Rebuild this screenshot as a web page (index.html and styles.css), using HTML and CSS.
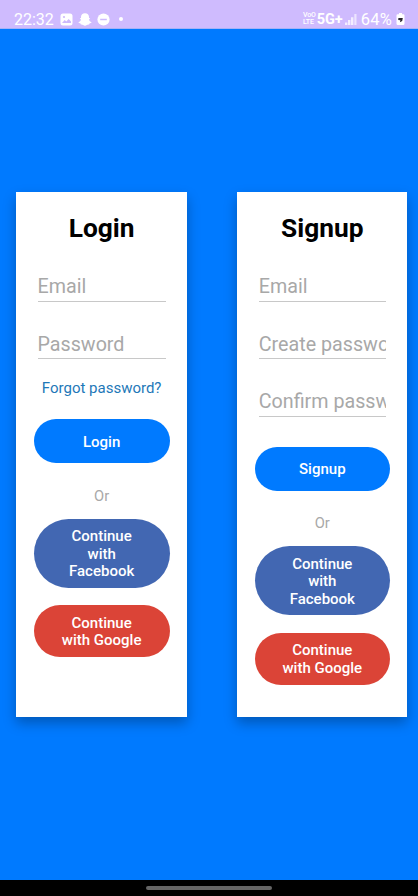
FILE: index.html
```html
<!DOCTYPE html>
<html lang="en">
<head>
<meta charset="utf-8">
<title>Login and Signup</title>
<link rel="stylesheet" href="styles.css">
</head>
<body>
<header class="status">
  <div class="status-left">
    <span class="clock">22:32</span>
    <svg class="i-photo" width="13" height="13" viewBox="0 0 13 13"><rect x=".5" y=".5" width="12" height="12" rx="2.5" fill="#fff"/><circle cx="4" cy="4" r="1.1" fill="#cdb9fc"/><path d="M2 10 4.7 7 6.3 8.4 8.7 6 11 8.6V10Z" fill="#cdb9fc"/></svg>
    <svg class="i-ghost" width="14" height="13" viewBox="0 0 14 13"><path d="M7 .3C4.5.3 3 1.8 3 3.9V5L1.8 5.2 3 6.7C2.7 7.8 1.8 8.7.4 9.2.6 10 1.7 10.2 2.5 10.4L2.9 11.5C4.8 11.2 5.3 12.7 7 12.7S9.2 11.2 11.1 11.5L11.5 10.4C12.3 10.2 13.4 10 13.6 9.2 12.2 8.7 11.3 7.8 11 6.7L12.2 5.2 11 5V3.9C11 1.8 9.5.3 7 .3Z" fill="#fff"/></svg>
    <svg class="i-dnd" width="13" height="13" viewBox="0 0 13 13"><circle cx="6.5" cy="6.5" r="6.1" fill="#fff"/><path d="M3.2 6.5H9.8" stroke="#cdb9fc" stroke-width="1.5"/></svg>
    <span class="dot"></span>
  </div>
  <div class="status-right">
    <span class="volte"><span>VoO</span><span>LTE</span></span>
    <span class="network">5G+</span>
    <svg class="i-signal" width="12" height="12" viewBox="0 0 12 12"><path d="M1.2 12V9.5M4.2 12V7M7.2 12V4.2" stroke="#fff" stroke-opacity=".75" stroke-width="2.4"/><path d="M10.4 12V1" stroke="#fff" stroke-opacity=".6" stroke-width="2.2"/></svg>
    <span class="battery">64%</span>
    <svg class="i-battery" width="9" height="12" viewBox="0 0 9 12"><path d="M3 0H6V1.2H7.3Q8.5 1.2 8.5 2.5V10.5Q8.5 12 7.2 12H1.8Q.5 12 .5 10.5V2.5Q.5 1.2 1.7 1.2H3Z" fill="#fff"/><path d="M2.4 5.1H6.8L6.2 8 3.9 9.2 4.4 7.2 2.2 7Z" fill="#29252e"/></svg>
  </div>
</header>
<main class="screen">
  <section class="card login">
    <h1>Login</h1>
    <div class="field">Email</div>
    <div class="field">Password</div>
    <a class="forgot">Forgot password?</a>
    <button class="btn">Login</button>
    <p class="or">Or</p>
    <button class="btn facebook">Continue<br>with<br>Facebook</button>
    <button class="btn google">Continue<br>with Google</button>
  </section>
  <section class="card signup">
    <h1>Signup</h1>
    <div class="field">Email</div>
    <div class="field">Create password</div>
    <div class="field">Confirm password</div>
    <button class="btn">Signup</button>
    <p class="or">Or</p>
    <button class="btn facebook">Continue<br>with<br>Facebook</button>
    <button class="btn google">Continue<br>with Google</button>
  </section>
</main>
<footer class="nav"><span class="handle"></span></footer>
</body>
</html>
```

FILE: styles.css
```css
* { box-sizing: border-box; }
body {
  margin: 0;
  width: 418px;
  height: 896px;
  display: flex;
  flex-direction: column;
  overflow: hidden;
  background: #007aff;
  font-family: Roboto, sans-serif;
}
.status {
  height: 29px;
  flex: none;
  display: flex;
  justify-content: space-between;
  padding: 8px 13px 0 14px;
  background: #cfbbfe;
  border-bottom: 1px solid #a5b2f8;
  color: #fff;
}
.status-left, .status-right { display: flex; align-items: center; height: 22px; }
.status svg { display: block; flex: none; }
.clock { font-size: 16px; width: 40px; margin-right: 6px; }
.i-photo { margin-right: 5px; }
.i-ghost { margin-right: 5px; }
.i-dnd { margin-right: 9px; }
.dot { width: 4px; height: 4px; border-radius: 50%; background: #fff; }
.volte { display: flex; flex-direction: column; font-size: 7px; line-height: 7px; font-weight: 500; letter-spacing: -.2px; margin-right: 1px; }
.network { font-size: 14.5px; font-weight: 700; margin-right: 2px; }
.i-signal { margin-right: 4px; }
.battery { font-size: 16.5px; letter-spacing: .2px; margin-right: 4px; }

.screen {
  flex: 1;
  display: flex;
  align-items: flex-start;
  gap: 50px;
  padding: 163px 11px 0 16px;
}
.card {
  height: 524.5px;
  padding: 20px 17.5px 0;
  background: #fff;
  box-shadow: 0 6px 12px rgba(0, 0, 0, .28);
  display: flex;
  flex-direction: column;
}
.login { width: 171.3px; flex: none; }
.signup { width: 170px; flex: none; }
h1 { margin: 0 0 31px; font-size: 26.3px; line-height: 33px; height: 32px; font-weight: 700; text-align: center; color: #000; }
.field {
  flex: none;
  height: 26.6px;
  margin: 0 4px 31px;
  border-bottom: 1px solid #c8c8c8;
  overflow: hidden;
  white-space: nowrap;
  font-size: 19.7px;
  line-height: 24.4px;
  color: #a8a8a8;
}
.forgot { margin-top: -12px; text-align: center; font-size: 15px; line-height: 20px; color: #1e78b8; white-space: nowrap; }
.btn {
  flex: none;
  width: 100%;
  height: 44px;
  padding: 2.5px 0 0;
  border: 0;
  border-radius: 26px;
  background: #007aff;
  color: #fff;
  font: 500 15px/17.7px Roboto, sans-serif;
}
.login .forgot + .btn { margin-top: 21px; }
.signup .field + .btn { margin-top: -.8px; }
.or { margin: 23.5px 0 14px; font-size: 14.7px; line-height: 18px; text-align: center; color: #a8a8a8; }
.facebook { height: 69px; border-radius: 34.5px; background: #4267b2; }
.google { height: 52px; margin-top: 17.3px; background: #db4437; }

.nav { height: 16px; flex: none; display: flex; justify-content: center; padding-top: 6px; background: #000; }
.handle { width: 126px; height: 4px; border-radius: 2px; background: #666; }
```
